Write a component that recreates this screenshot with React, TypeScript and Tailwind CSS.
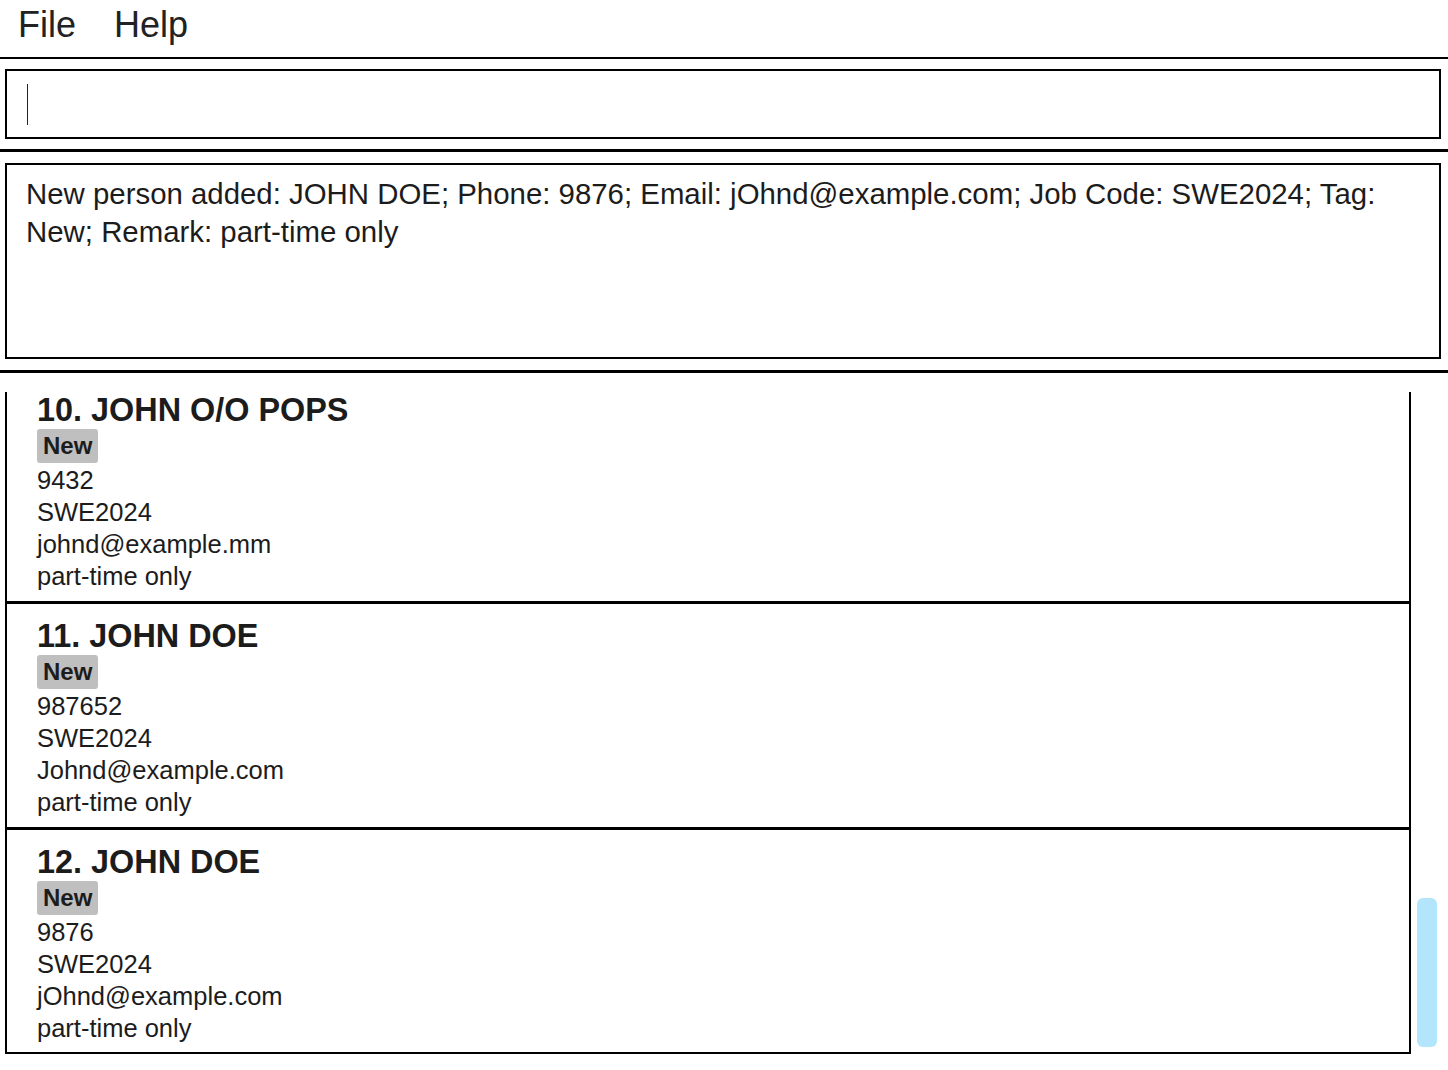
import React from "react";

type Person = { title: string; phone: string; job: string; email: string; remark: string };

const people: Person[] = [
  { title: "10. JOHN O/O POPS", phone: "9432", job: "SWE2024", email: "johnd@example.mm", remark: "part-time only" },
  { title: "11. JOHN DOE", phone: "987652", job: "SWE2024", email: "Johnd@example.com", remark: "part-time only" },
  { title: "12. JOHN DOE", phone: "9876", job: "SWE2024", email: "jOhnd@example.com", remark: "part-time only" },
];

function Card({ p, last }: { p: Person; last: boolean }) {
  return (
    <div
      className={
        "border-x-2 border-black pl-[30px] pt-[14px] " +
        (last ? "border-b-2 pb-[8px]" : "border-b-[3px] pb-[9px]")
      }
    >
      <div className="h-[36px] text-[32.4px] leading-[36px] font-bold text-[#1c1c1c] whitespace-nowrap">{p.title}</div>
      <div className="mt-[1px] flex">
        <span className="h-[34px] px-[6px] rounded-[3px] bg-[#bfbfbf] text-[24px] leading-[34px] font-bold text-[#1c1c1c]">
          New
        </span>
      </div>
      <div className="mt-[1px] text-[25.5px] leading-[32px] text-[#1c1c1c]">
        <div>{p.phone}</div>
        <div>{p.job}</div>
        <div>{p.email}</div>
        <div>{p.remark}</div>
      </div>
    </div>
  );
}

export default function App() {
  return (
    <div
      className="w-[1448px] h-[1070px] bg-white overflow-hidden flex flex-col"
      style={{ fontFamily: '"Liberation Sans", Arial, sans-serif' }}
    >
      {/* menu bar */}
      <div className="h-[59px] border-b-2 border-black flex items-center text-[36px] text-[#222] pb-[7px]">
        <span className="ml-[18px]">File</span>
        <span className="ml-[38px]">Help</span>
      </div>

      {/* command box */}
      <div className="pt-[10px] pl-[5px] pr-[7px]">
        <div className="h-[70px] border-2 border-black flex items-center pl-[20px]">
          <div className="w-[1px] h-[41px] bg-[#222]" />
        </div>
      </div>

      <div className="mt-[10px] h-[3px] bg-black" />

      {/* result box */}
      <div className="pt-[11px] pl-[5px] pr-[7px]">
        <div className="h-[196px] border-2 border-black pl-[19px] pt-[10px] text-[29.4px] leading-[38px] text-[#1c1c1c]">
          <div className="whitespace-nowrap">
            New person added: JOHN DOE; Phone: 9876; Email: jOhnd@example.com; Job Code: SWE2024; Tag:
          </div>
          <div className="whitespace-nowrap">New; Remark: part-time only</div>
        </div>
      </div>

      <div className="mt-[11px] h-[3px] bg-black" />

      {/* list */}
      <div className="mt-[19px] flex h-[678px]">
        <div className="ml-[5px] w-[1406px] overflow-hidden">
          <div className="-mt-[14px]">
            {people.map((p, i) => (
              <Card key={i} p={p} last={i === people.length - 1} />
            ))}
          </div>
        </div>
        <div className="pl-[6px]">
          <div className="mt-[506px] h-[149px] w-[20px] rounded-[6px] bg-[#b3e5fc]" />
        </div>
      </div>
    </div>
  );
}
